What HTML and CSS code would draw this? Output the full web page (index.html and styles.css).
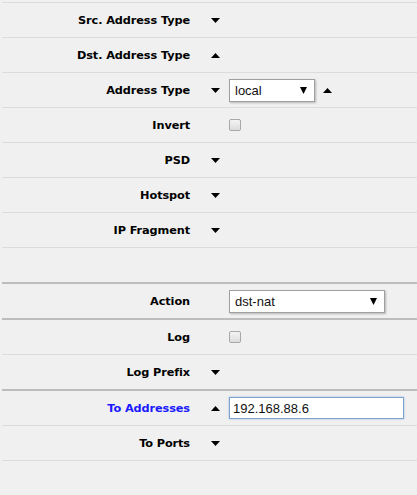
FILE: index.html
```html
<!DOCTYPE html>
<html lang="en">

<head>
    <meta charset="UTF-8">
    <title>NAT Rule</title>
    <link rel="stylesheet" href="styles.css">
</head>

<body>

    <div class="form">

        <!-- Match section -->
        <div class="row">
            <div class="label">Src. Address Type</div>
            <div class="field"><span class="toggle"><svg class="tri" viewBox="0 0 9 5"><path d="M0 0H9L4.5 5Z"/></svg></span></div>
        </div>
        <div class="row">
            <div class="label">Dst. Address Type</div>
            <div class="field"><span class="toggle"><svg class="tri" viewBox="0 0 9 5"><path d="M0 5H9L4.5 0Z"/></svg></span></div>
        </div>
        <div class="row">
            <div class="label">Address Type</div>
            <div class="field">
                <span class="toggle"><svg class="tri" viewBox="0 0 9 5"><path d="M0 0H9L4.5 5Z"/></svg></span>
                <div class="select small">
                    <span>local</span>
                    <svg class="caret" viewBox="0 0 7 7"><path d="M0 0H7L3.5 7Z"/></svg>
                </div>
                <span class="after"><svg class="tri" viewBox="0 0 9 5"><path d="M0 5H9L4.5 0Z"/></svg></span>
            </div>
        </div>
        <div class="row">
            <div class="label">Invert</div>
            <div class="field"><span class="toggle"></span><span class="check"></span></div>
        </div>
        <div class="row">
            <div class="label">PSD</div>
            <div class="field"><span class="toggle"><svg class="tri" viewBox="0 0 9 5"><path d="M0 0H9L4.5 5Z"/></svg></span></div>
        </div>
        <div class="row">
            <div class="label">Hotspot</div>
            <div class="field"><span class="toggle"><svg class="tri" viewBox="0 0 9 5"><path d="M0 0H9L4.5 5Z"/></svg></span></div>
        </div>
        <div class="row">
            <div class="label">IP Fragment</div>
            <div class="field"><span class="toggle"><svg class="tri" viewBox="0 0 9 5"><path d="M0 0H9L4.5 5Z"/></svg></span></div>
        </div>
        <div class="row empty"></div>

        <!-- Action section -->
        <div class="row section">
            <div class="label">Action</div>
            <div class="field">
                <span class="toggle"></span>
                <div class="select wide">
                    <span>dst-nat</span>
                    <svg class="caret" viewBox="0 0 7 7"><path d="M0 0H7L3.5 7Z"/></svg>
                </div>
            </div>
        </div>
        <div class="row section">
            <div class="label">Log</div>
            <div class="field"><span class="toggle"></span><span class="check"></span></div>
        </div>
        <div class="row">
            <div class="label">Log Prefix</div>
            <div class="field"><span class="toggle"><svg class="tri" viewBox="0 0 9 5"><path d="M0 0H9L4.5 5Z"/></svg></span></div>
        </div>
        <div class="row section">
            <div class="label active">To Addresses</div>
            <div class="field">
                <span class="toggle"><svg class="tri" viewBox="0 0 9 5"><path d="M0 5H9L4.5 0Z"/></svg></span>
                <input type="text" class="text" value="192.168.88.6">
            </div>
        </div>
        <div class="row last">
            <div class="label">To Ports</div>
            <div class="field"><span class="toggle"><svg class="tri" viewBox="0 0 9 5"><path d="M0 0H9L4.5 5Z"/></svg></span></div>
        </div>

    </div>

</body>

</html>
```

FILE: styles.css
```css
body {
    margin: 0;
    padding: 0;
    background-color: #f0f0f0;
    font-family: "DejaVu Sans", Verdana, sans-serif;
}

.form {
    margin: 2px 0 0 2px;
}

.row {
    display: grid;
    grid-template-columns: 188px 1fr;
    align-items: center;
    height: 34px;
    border-top: 1px solid #dcdcdc;
}

.row.section {
    border-top: 2px solid #bdbdbd;
}

.row.last {
    border-bottom: 1px solid #dcdcdc;
}

.label {
    text-align: right;
    font-size: 11.3px;
    font-weight: bold;
    color: #000;
    letter-spacing: -0.1px;
}

.label.active {
    color: #1a1aff;
}

.field {
    display: flex;
    align-items: center;
    padding-left: 21px;
}

.toggle {
    display: flex;
    align-items: center;
    width: 18px;
}

.tri {
    width: 9px;
    height: 5px;
    fill: #000;
}

.after {
    display: flex;
    margin-left: 8px;
}

.select {
    display: flex;
    align-items: center;
    justify-content: space-between;
    box-sizing: border-box;
    height: 23px;
    padding: 0 7px 0 5px;
    background-color: #fff;
    border: 1px solid #a0a0a0;
    box-shadow: 1px 1px 2px rgba(0, 0, 0, 0.25);
    font-family: "Liberation Sans", Arial, sans-serif;
    font-size: 13px;
    color: #111;
}

.select.small {
    width: 86px;
}

.select.wide {
    width: 156px;
}

.caret {
    width: 7px;
    height: 7px;
    fill: #000;
}

.check {
    box-sizing: border-box;
    width: 12px;
    height: 12px;
    border: 1px solid #a8a8a8;
    border-radius: 2px;
    background: linear-gradient(#f4f4f4, #dcdcdc);
}

input.text {
    box-sizing: border-box;
    width: 175px;
    height: 22px;
    margin: 0;
    padding: 0 3px;
    border: 1px solid #7da2ce;
    box-shadow: 0 0 2px rgba(90, 140, 210, 0.5);
    background-color: #fff;
    font-family: "Liberation Sans", Arial, sans-serif;
    font-size: 13px;
    color: #111;
    outline: none;
}
```
